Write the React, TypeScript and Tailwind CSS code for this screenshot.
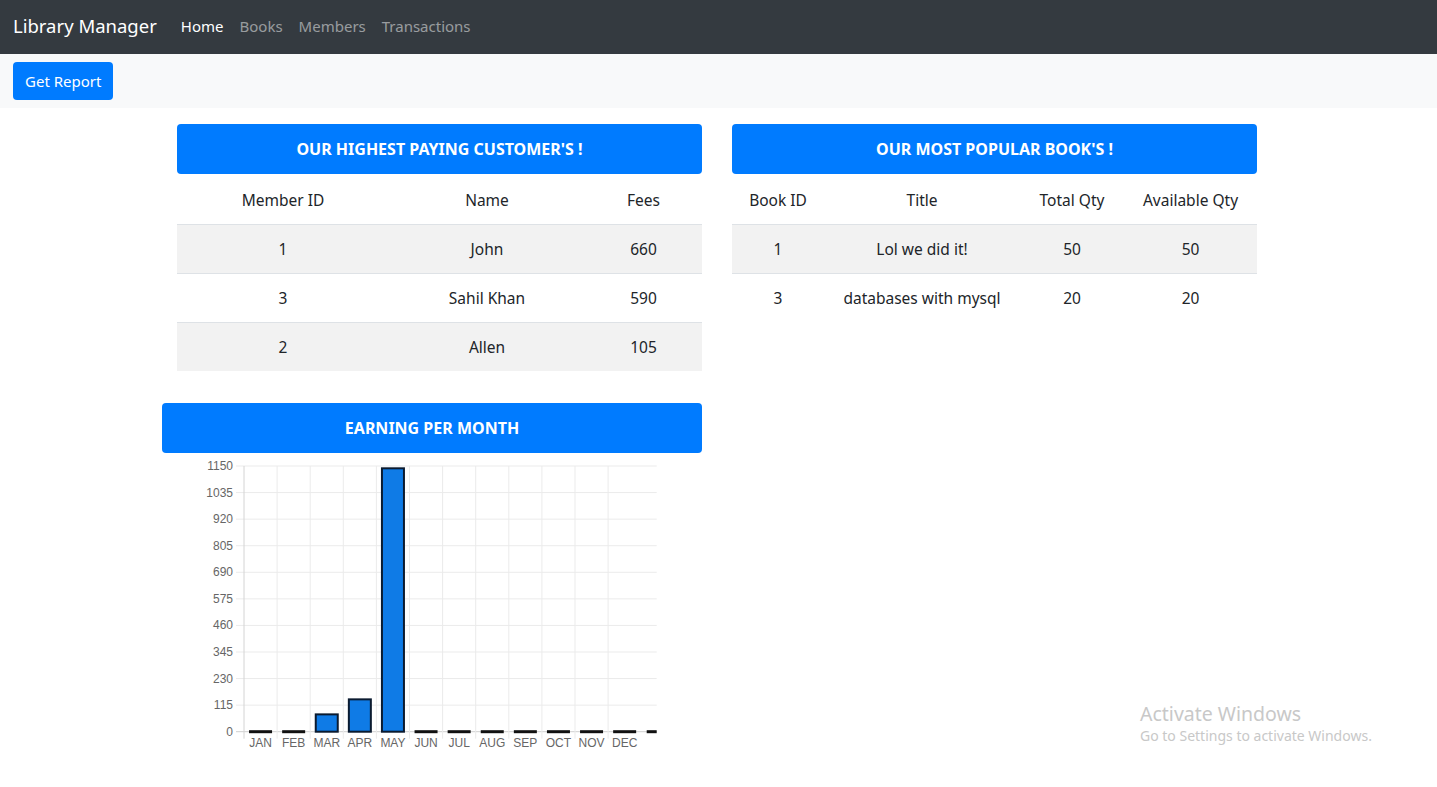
import React from "react";

const members = [
  { id: 1, name: "John", fees: 660 },
  { id: 3, name: "Sahil Khan", fees: 590 },
  { id: 2, name: "Allen", fees: 105 },
];

const books = [
  { id: 1, title: "Lol we did it!", total: 50, available: 50 },
  { id: 3, title: "databases with mysql", total: 20, available: 20 },
];

const months = ["JAN", "FEB", "MAR", "APR", "MAY", "JUN", "JUL", "AUG", "SEP", "OCT", "NOV", "DEC"];
const earnings = [0, 0, 75, 140, 1140, 0, 0, 0, 0, 0, 0, 0];

function SectionTitle({ children }: { children: React.ReactNode }) {
  return (
    <div className="flex h-[50px] items-center justify-center rounded-[4px] bg-[#007bff] text-[16px] font-bold text-white">
      {children}
    </div>
  );
}

function EarningsChart() {
  // plot area in svg coords (svg starts at page x 162, y 453)
  const left = 82;
  const right = 494.7;
  const top = 13;
  const bottom = 278.7;
  const step = 33.1;
  const max = 1150;
  const h = bottom - top;
  const ticks = [1150, 1035, 920, 805, 690, 575, 460, 345, 230, 115, 0];

  return (
    <svg width="540" height="310" className="block">
      {ticks.map((t, i) => {
        const y = top + (h / 10) * i;
        return (
          <g key={t}>
            <line x1={left - 8} x2={right} y1={y} y2={y} stroke={t === 0 ? "#cfcfcf" : "#ebebeb"} strokeWidth="1" />
            <text
              x={left - 11}
              y={y + 4}
              textAnchor="end"
              fontSize="12"
              fill="#666"
              fontFamily="'Liberation Sans', Arial, sans-serif"
            >
              {t}
            </text>
          </g>
        );
      })}
      {Array.from({ length: 12 }).map((_, k) => {
        const x = left + step * k;
        return (
          <line key={k} x1={x} x2={x} y1={top} y2={bottom + 7} stroke={k === 0 ? "#d4d4d4" : "#ebebeb"} strokeWidth="1" />
        );
      })}
      {months.map((m, k) => {
        const cx = left + step * (k + 0.5);
        const v = earnings[k];
        const bh = (v / max) * h;
        return (
          <g key={m}>
            {v > 0 ? (
              <rect
                x={cx - 11}
                y={bottom - bh}
                width="22"
                height={bh}
                fill="#0f7be6"
                stroke="#0b1b30"
                strokeWidth="2"
              />
            ) : (
              <rect x={cx - 11.5} y={bottom - 1.5} width="23" height="3" fill="#111" />
            )}
            <text
              x={cx}
              y={294}
              textAnchor="middle"
              fontSize="12"
              fill="#666"
              fontFamily="'Liberation Sans', Arial, sans-serif"
            >
              {m}
            </text>
          </g>
        );
      })}
      <rect x={right - 10} y={bottom - 1.5} width="10" height="3" fill="#111" />
    </svg>
  );
}

export default function App() {
  return (
    <div className="relative min-h-[787px] bg-white text-[#212529]" style={{ fontFamily: "'Noto Sans', 'Open Sans', sans-serif" }}>
      <nav className="flex h-[54px] items-center bg-[#343a40] px-[13px] pb-[2px]">
        <span className="mr-4 text-[18.5px] text-white">Library Manager</span>
        <a className="px-2 text-[15px] text-white">Home</a>
        <a className="px-2 text-[15px] text-white/50">Books</a>
        <a className="px-2 text-[15px] text-white/50">Members</a>
        <a className="px-2 text-[15px] text-white/50">Transactions</a>
      </nav>

      <div className="flex h-[54px] items-center bg-[#f8f9fa] px-[13px]">
        <button className="h-[38px] rounded-[4px] bg-[#007bff] px-3 text-[15px] text-white">Get Report</button>
      </div>

      <div className="flex gap-[30px] pl-[162px] pt-[16px]">
        <div className="w-[540px]">
          <div className="pl-[15px]">
            <SectionTitle>OUR HIGHEST PAYING CUSTOMER&apos;S !</SectionTitle>
            <table className="w-full border-collapse text-center text-[15.5px]">
              <thead>
                <tr className="h-[50px] border-b border-[#dee2e6]">
                  <th className="w-[212px] pt-[3px] font-normal">Member ID</th>
                  <th className="w-[196px] pt-[3px] font-normal">Name</th>
                  <th className="pt-[3px] font-normal">Fees</th>
                </tr>
              </thead>
              <tbody>
                {members.map((m, i) => (
                  <tr key={m.id} className={`h-[49px] ${i > 0 ? "border-t border-[#dee2e6]" : ""} ${i % 2 === 0 ? "bg-[#f2f2f2]" : ""}`}>
                    <td className="pt-[2px]">{m.id}</td>
                    <td className="pt-[2px]">{m.name}</td>
                    <td className="pt-[2px]">{m.fees}</td>
                  </tr>
                ))}
              </tbody>
            </table>
          </div>

          <div className="mt-[32px]">
            <SectionTitle>EARNING PER MONTH</SectionTitle>
            <EarningsChart />
          </div>
        </div>

        <div className="w-[525px]">
          <SectionTitle>OUR MOST POPULAR BOOK&apos;S !</SectionTitle>
          <table className="w-full border-collapse text-center text-[15.5px]">
            <thead>
              <tr className="h-[50px] border-b border-[#dee2e6]">
                <th className="w-[92px] pt-[3px] font-normal">Book ID</th>
                <th className="w-[196px] pt-[3px] font-normal">Title</th>
                <th className="w-[104px] pt-[3px] font-normal">Total Qty</th>
                <th className="pt-[3px] font-normal">Available Qty</th>
              </tr>
            </thead>
            <tbody>
              {books.map((b, i) => (
                <tr key={b.id} className={`h-[49px] ${i > 0 ? "border-t border-[#dee2e6]" : ""} ${i % 2 === 0 ? "bg-[#f2f2f2]" : ""}`}>
                  <td className="pt-[2px]">{b.id}</td>
                  <td className="pt-[2px]">{b.title}</td>
                  <td className="pt-[2px]">{b.total}</td>
                  <td className="pt-[2px]">{b.available}</td>
                </tr>
              ))}
            </tbody>
          </table>
        </div>
      </div>

      <div className="pointer-events-none absolute left-[1140px] top-[702px] text-[#c8c8c8]">
        <div className="text-[19.5px] leading-[24px]">Activate Windows</div>
        <div className="text-[14px] leading-[20px]">Go to Settings to activate Windows.</div>
      </div>
    </div>
  );
}
